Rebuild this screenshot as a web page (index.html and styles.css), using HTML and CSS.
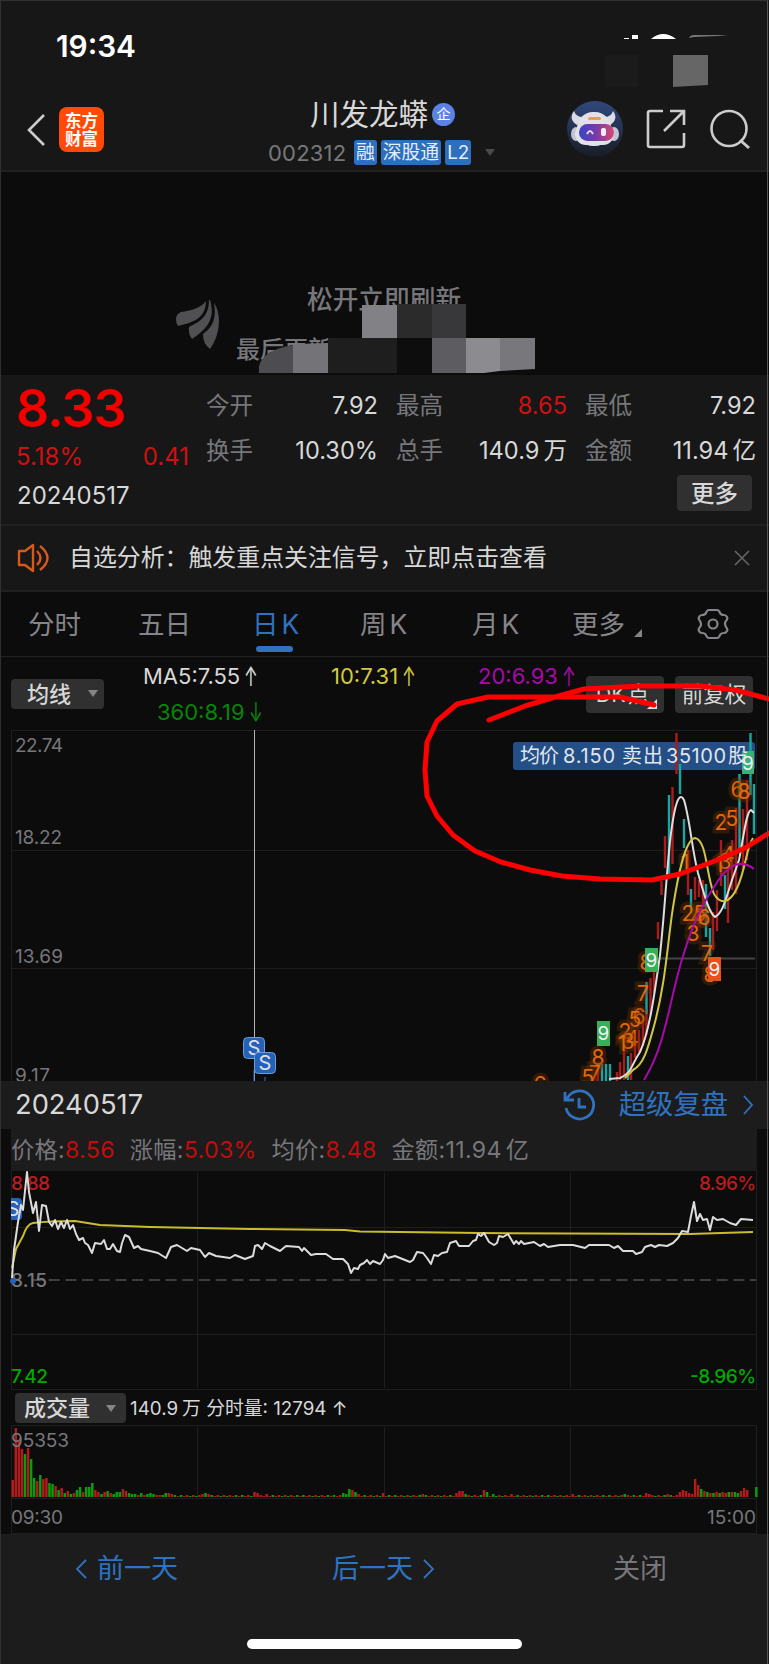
FILE: index.html
```
<!DOCTYPE html>
<html lang="zh-CN">
<head>
    <meta charset="UTF-8">
    <meta name="viewport" content="width=device-width, initial-scale=1.0">
    <title>川发龙蟒 002312</title>
    <link rel="stylesheet" href="styles.css">
</head>
<body>
    <div class="phone">
        <div class="status-bar">
            <span class="clock">19:34</span>
            <svg class="status-icons" width="130" height="60" viewBox="600 30 130 60">
                <path d="M624 38h5v1h-5zM632 35h6v4h-6zM651 39q12-10 25 0z" fill="#fff"/>
                <path d="M689 38q1-3 5-3h34l-10 1-24 1-5 1z" fill="#777"/>
                <path d="M605 55h33v32h-33z" fill="#1b1b1b"/>
                <path d="M673 55h35v30l-35 2z" fill="#666"/>
            </svg>
        </div>

        <header class="header">
            <div class="header-left">
                <svg width="20" height="34" viewBox="0 0 20 34"><path d="M18 2L3 17l15 15" fill="none" stroke="#ccc" stroke-width="2.6"/></svg>
                <div class="brand">东方<br>财富</div>
            </div>
            <div class="title">
                <div class="stock-name">川发龙蟒<span class="badge-qi">企</span></div>
                <div class="stock-code">
                    <span class="code">002312</span>
                    <span class="tag">融</span>
                    <span class="tag">深股通</span>
                    <span class="tag">L2</span>
                    <i class="caret"></i>
                </div>
            </div>
            <div class="header-right">
                <svg width="56" height="56" viewBox="0 0 56 56">
                    <defs>
                        <linearGradient id="halo" x2="0" y2="1"><stop offset="0" stop-color="#30487c"/><stop offset="1" stop-color="#191c24"/></linearGradient>
                        <linearGradient id="visor"><stop offset="0" stop-color="#3846c4"/><stop offset=".5" stop-color="#7c3aa8"/><stop offset="1" stop-color="#d84870"/></linearGradient>
                    </defs>
                    <circle cx="28" cy="28" r="28" fill="url(#halo)"/>
                    <path d="M7 10q-6 8 3 14l6-8q-7 0-9-6zM46 10q6 8-3 14l-6-8q7 0 9-6z" fill="#dcdce6"/>
                    <rect x="10" y="11" width="34" height="34" rx="16" fill="#e2e0e8"/>
                    <ellipse cx="9" cy="33" rx="5" ry="7" fill="#c3c4d2"/>
                    <ellipse cx="47" cy="33" rx="5" ry="7" fill="#c3c4d2"/>
                    <rect x="8" y="22" width="39" height="22" rx="11" fill="#e2e0e8"/>
                    <rect x="21" y="16" width="13" height="3" rx="1.5" fill="#e99b59"/>
                    <rect x="12" y="23" width="35" height="17" rx="8.5" fill="url(#visor)"/>
                    <path d="M20 33q3-6 6 0" fill="none" stroke="#ddd" stroke-width="2"/>
                    <rect x="34" y="27" width="5" height="8" rx="2" fill="#eee"/>
                </svg>
                <svg width="40" height="40" viewBox="0 0 40 40"><path d="M17 2H4q-2 0-2 2v32q0 2 2 2h32q2 0 2-2V24M24 2h14v14M38 2L18 22" fill="none" stroke="#ccc" stroke-width="2.6"/></svg>
                <svg width="42" height="42" viewBox="0 0 42 42"><circle cx="20" cy="19.500" r="17.500" fill="none" stroke="#ccc" stroke-width="2.600"/><path d="M31 31l9 8" stroke="#ccc" stroke-width="3"/></svg>
            </div>
        </header>

        <section class="refresh">
            <p class="refresh-tip">松开立即刷新</p>
            <p class="refresh-time">最后更新</p>
            <svg class="refresh-art" width="400" height="90" viewBox="160 290 400 90">
                <path d="M206 301C201 308 190 311 181 312Q176 314 176 319Q176 323 178 326C188 323 206 321 206 301Z" fill="#505052"/>
                <path d="M209 300C209 317 199 322 189 327Q188 334 192 339C202 332 217 322 210 300Z" fill="#505052"/>
                <path d="M214 303C217 321 211 328 203 334Q203 344 210 349C220 336 222 314 214 303Z" fill="#505052"/>
                <path d="M362 305h35v33h-35z" fill="#818186"/>
                <path d="M397 304h35v34h-35z" fill="#2b2b2c"/>
                <path d="M432 304h34v34h-34z" fill="#38383a"/>
                <path d="M259 373v-7q4-16 34-21v28z" fill="#4d4d51"/>
                <path d="M293 345q16-2 35-2v30h-35z" fill="#747478"/>
                <path d="M328 338h69v35h-69z" fill="#1e1e1e"/>
                <path d="M397 338h35v35h-35z" fill="#0d0d0d"/>
                <path d="M432 338h34v35h-34z" fill="#5d5d61"/>
                <path d="M466 338h34v33l-16 2h-18z" fill="#8b8b90"/>
                <path d="M500 338h35v31l-35 2z" fill="#78787c"/>
            </svg>
        </section>

        <section class="quote">
            <div class="price">
                <div class="price-now">8.33</div>
                <div class="price-change"><span>5.18%</span><span>0.41</span></div>
            </div>
            <div class="stats">
                <div class="stat"><span>今开</span><b>7.92</b></div>
                <div class="stat"><span>最高</span><b class="red">8.65</b></div>
                <div class="stat"><span>最低</span><b>7.92</b></div>
                <div class="stat"><span>换手</span><b>10.30%</b></div>
                <div class="stat"><span>总手</span><b>140.9<i class="unit">万</i></b></div>
                <div class="stat"><span>金额</span><b>11.94<i class="unit">亿</i></b></div>
            </div>
            <div class="quote-date">20240517</div>
            <div class="more-btn">更多</div>
        </section>

        <section class="notice">
            <svg width="34" height="30" viewBox="0 0 34 30"><path d="M2 8h6l8-6v26l-8-6H2zM20 8q7 7 0 14M23 3q15 12 0 24" fill="none" stroke="#d85a18" stroke-width="2.4" stroke-linejoin="round"/></svg>
            <span>自选分析：触发重点关注信号，立即点击查看</span>
            <svg width="16" height="16" viewBox="0 0 16 16"><path d="M1 1l14 14M15 1L1 15" stroke="#66666a" stroke-width="1.600"/></svg>
        </section>

        <nav class="tabs">
            <span>分时</span>
            <span>五日</span>
            <span class="active">日<i class="unit">K</i></span>
            <span>周<i class="unit">K</i></span>
            <span>月<i class="unit">K</i></span>
            <span class="tab-more">更多</span>
            <svg width="32" height="32" viewBox="0 0 32 32" fill="none" stroke="#858589" stroke-width="2.2" stroke-linejoin="round"><path d="M12 2h8q2 0 3 3 1 2 4 2 2 0 3 2 1 2-1 4t0 6q2 2 1 4-1 2-3 2-3 0-4 2-1 3-3 3h-8q-2 0-3-3-1-2-4-2-2 0-3-2-1-2 1-4t0-6q-2-2-1-4 1-2 3-2 3 0 4-2 1-3 3-3z"/><circle cx="16" cy="16" r="4.500"/></svg>
        </nav>

        <section class="ma">
            <div class="select">均线<i class="caret"></i></div>
            <div class="ma-values">
                <span class="ma5">MA5:7.55<em>↑</em></span>
                <span class="ma10">10:7.31<em>↑</em></span>
                <span class="ma20">20:6.93<em>↑</em></span>
                <span class="ma360">360:8.19<em>↓</em></span>
            </div>
            <div class="chip chip-dk">DK<i class="unit">点</i></div>
            <div class="chip">前复权</div>
        </section>

        <svg class="chart" width="769" height="351" viewBox="0 730 769 351">
            <path class="grid" d="M11.500 1081V730.500H756.500V1081M11 850.500H756M11 968.500H756"/>
            <path d="M659 958.500H755" stroke="#444" stroke-width="2"/>
            <g class="axis">
                <text x="15" y="751.500" textLength="48">22.74</text>
                <text x="15" y="844" textLength="47">18.22</text>
                <text x="15" y="962.500" textLength="48">13.69</text>
                <text x="15" y="1082" textLength="35">9.17</text>
            </g>
            <rect x="513" y="742" width="242" height="28" rx="3" fill="#234e86"/>
            <!-- candles -->
            <path class="candle up" d="M676.500 733v41M672.500 787v77M665 836v32M661.500 881v14M658 922v17M688 850v45M695 877v23M699 880v17M703 880v25M713 912v38M717 890v41M721 840v46M728 868v55M732 840v50M736 808v86M743 809v60M747 780v80M654 972v21M650.500 978v37M646.500 1010v25M643 1022v24M639 1030v22M635 1040v18M631 1053v27M624 1050v30M620 1062v18M617 1072v9M598 1070v11"/>
            <path class="candle down" d="M680 764v30M669 795v79M684 819v29M691 889v24M706 884v53M710 928v28M725 875v34M739.500 774v76M750.500 733v62M754 784v50M646.500 982v32M628 1056v24M602 1064v17M606 1064v17M610 1064v17"/>
            <g class="count">
                <text x="737" y="797">6</text><text x="744" y="799">8</text>
                <text x="721" y="830">2</text><text x="732" y="826">5</text>
                <text x="728" y="862">4</text><text x="725" y="869">3</text><text x="719" y="872">1</text>
                <text x="685" y="870">1</text>
                <text x="688" y="921">2</text><text x="697" y="924">4</text><text x="700" y="921">5</text><text x="704" y="925">6</text>
                <text x="693" y="941">3</text><text x="707" y="961">7</text><text x="710" y="982">8</text>
                <text x="646" y="970">8</text><text x="643" y="1001">7</text><text x="639" y="1024">6</text><text x="635" y="1027">5</text>
                <text x="625" y="1039">2</text><text x="632" y="1046">4</text><text x="628" y="1049">3</text><text x="622" y="1051">1</text>
                <text x="598" y="1065">8</text><text x="595" y="1081">7</text><text x="588" y="1085">5</text><text x="540" y="1092">6</text>
            </g>
            <path class="line" stroke="#dedede" d="M609 1079L620 1078C632 1073 630 1067 640 1052C650 1030 655 990 660 955C665 908 667 865 671 833C675 803 679 791 684 800C690 820 692 850 698 873C704 894 709 913 715 917C723 913 726 898 732 880L739 860C743 842 746 811 751 810L754 813"/>
            <path class="line" stroke="#cfc544" d="M625 1078L633 1070C644 1064 648 1048 654 1026C665 985 667 950 672 914C678 874 685 840 695 838C707 840 706 875 714 894C720 904 729 905 737 888C746 869 746 848 753 838"/>
            <path class="line" stroke="#a80aa8" d="M644 1080C660 1054 665 1028 673 994C683 950 695 914 714 887C727 865 740 858 754 869"/>
            <g class="nine">
                <rect x="645" y="948" width="13" height="24" fill="#3aaf5a"/><text x="651.500" y="967">9</text>
                <rect x="597" y="1021" width="13" height="25" fill="#3aaf5a"/><text x="603.500" y="1040">9</text>
                <rect x="708" y="957" width="13" height="24" fill="#e8501e"/><text x="714.500" y="976">9</text>
                <rect x="742" y="751" width="12" height="23" fill="#3aaf7a"/><text x="748" y="770">9</text>
            </g>
            <g class="deal">
                <text x="520" y="763" textLength="39">均价</text>
                <text x="563" y="763" textLength="52">8.150</text>
                <text x="622" y="763" textLength="41">卖出</text>
                <text x="666" y="763" textLength="60">35100</text>
                <text x="728" y="763">股</text>
            </g>
            <path d="M254.500 730V1081" stroke="#b5b5b5"/>
            <g class="mark">
                <path d="M265 1077v4M254 1070v11" stroke="#2f75d8"/>
                <rect x="243.500" y="1037.500" width="21" height="21" rx="4"/><text x="254" y="1055">S</text>
                <rect x="254.500" y="1052.500" width="21" height="21" rx="4"/><text x="265" y="1070">S</text>
            </g>
        </svg>

        <section class="day-head">
            <span>20240517</span>
            <div class="replay">
                <svg width="32" height="32" viewBox="0 0 32 32" fill="none" stroke="#2f72bf" stroke-width="2.800"><path d="M4 10A14 14 0 1 1 3 19M2 3v8h9M16 9v9h7"/></svg>
                <span>超级复盘</span>
                <svg width="12" height="20" viewBox="0 0 12 20"><path d="M2 1l8 9-8 9" fill="none" stroke="#2f72bf" stroke-width="1.800"/></svg>
            </div>
        </section>

        <section class="day-info">
            <span>价格:<b>8.56</b></span>
            <span>涨幅:<b>5.03%</b></span>
            <span>均价:<b>8.48</b></span>
            <span>金额:11.94<i class="unit">亿</i></span>
        </section>

        <svg class="chart" width="769" height="219" viewBox="0 1171 769 219">
            <path class="grid" d="M11.500 1171V1389.500H756.500V1171M197.500 1173V1388M384.500 1173V1388M570.500 1173V1388M11 1227.500H756M11 1334.500H756"/>
            <path d="M28 1280H756" stroke="#3e3e41" stroke-width="2" stroke-dasharray="11 5.700" stroke-dashoffset="-4"/>
            <g class="axis day-axis">
                <text x="11" y="1190" fill="#b81c1c" textLength="39">8.88</text>
                <text x="11" y="1287" fill="#77777b" textLength="36">8.15</text>
                <text x="11" y="1383" fill="#00a800" textLength="37">7.42</text>
                <text x="756" y="1190" fill="#b81c1c" text-anchor="end" textLength="57">8.96%</text>
                <text x="756" y="1383" fill="#00a800" text-anchor="end" textLength="66">-8.96%</text>
            </g>
            <g class="mark">
                <path d="M11 1198h7q4 0 4 4v14q0 4-4 4h-7z" fill="#2461b8"/>
                <text x="13" y="1216">S</text>
                <circle cx="13" cy="1281" r="3" fill="#2461b8"/>
                <path d="M0 1195h11v28H0z" fill="#0c0c0c"/>
            </g>
            <path class="line" stroke="#c9bd2c" d="M12 1268L16 1249L23 1236Q27 1224 33 1223Q50 1221 75 1221L100 1225L150 1227L250 1229L345 1230L360 1231.500L400 1232L480 1233L690 1234L753 1232"/>
            <path class="line" stroke="#dcdcdc" d="M12 1278L14 1250 18 1222 21 1205 23 1210 27 1172 29 1192 33 1213 36 1202 39 1231 42 1205 46 1206 49 1222 52 1226 55 1220 58 1229 61 1222 64 1228 67 1220 70 1229 73 1225 76 1234 79 1240 83 1238 85 1243 88 1245 92 1253 95 1243 101 1244 104 1240 107 1249 110 1249 113 1244 117 1251 120 1252 122 1243 125 1235 129 1237 134 1248 138 1246 141 1249 150 1251 158 1253 166 1258 171 1247 177 1245 187 1251 191 1248 200 1250 205 1257 209 1253 216 1256 230 1258 235 1255 245 1259 253 1256 255 1246 258 1245 262 1249 265 1243 270 1246 280 1251 286 1246 299 1247 302 1251 304 1248 311 1255 316 1254 326 1254 333 1259 343 1259 348 1264 351 1273 354 1268 358 1269 360 1265 364 1263 367 1260 370 1264 373 1261 380 1264 383 1260 385 1254 388 1258 395 1256 400 1258 410 1262 413 1260 417 1252 423 1253 427 1258 431 1264 434 1255 438 1256 442 1253 447 1252 450 1243 456 1241 459 1246 469 1246 473 1241 476 1240 478 1234 481 1236 484 1233 489 1242 494 1245 497 1243 499 1236 503 1237 508 1234 514 1244 516 1241 519 1244 521 1241 524 1244 534 1242 540 1246 544 1244 548 1247 560 1245 573 1245 585 1248 589 1245 609 1245 614 1248 618 1246 623 1251 633 1251 636 1254 642 1252 645 1247 651 1245 655 1247 659 1245 667 1246 673 1243 678 1238 682 1231 688 1232 691 1216 694 1202 697 1221 700 1214 703 1220 707 1219 710 1230 713 1217 717 1220 723 1219 730 1223 736 1225 741 1219 753 1220"/>
        </svg>

        <section class="volume-head">
            <div class="select">成交量<i class="caret"></i></div>
            <span>140.9<i class="unit">万</i> 分时量: 12794 <em>↑</em></span>
        </section>

        <svg class="chart" width="769" height="109" viewBox="0 1425 769 109">
            <path class="grid" d="M11.500 1425.500H756.500V1533.500H11.500ZM197.500 1427V1497M384.500 1427V1497M570.500 1427V1497M11 1498.500H756"/>
            <g id="volume"></g>
            <g class="axis">
                <text x="11" y="1447" textLength="58">95353</text>
                <text x="11" y="1523.500" textLength="52">09:30</text>
                <text x="756" y="1523.500" text-anchor="end" textLength="49">15:00</text>
            </g>
        </svg>

        <footer class="footer">
            <div class="footer-nav">
                <span class="link"><svg width="11" height="20" viewBox="0 0 11 20"><path d="M10 1L1 10l9 9"/></svg>前一天</span>
                <span class="link">后一天<svg width="11" height="20" viewBox="0 0 11 20"><path d="M1 1l9 9-9 9"/></svg></span>
                <span>关闭</span>
            </div>
            <div class="home-bar"></div>
        </footer>

        <svg class="scribble" width="769" height="240" viewBox="0 670 769 240">
            <path d="M489 720L525 706 555 697 584 689 640 686 700 686 735 690 769 699M654 705L620 697 488 697 457 704 437 721 427 742 425 770 427 796 437 816 453 835 475 851 501 862 530 870 562 876 600 879 652 880 680 874 720 859 745 848 769 833"/>
        </svg>
    </div>
    <script src="volume.js"></script>
</body>
</html>
```
FILE: volume.js
```
// minute volume bars: r/g = colour, number = height in px
var first = 'r17 r69 r57 r48 g43 r49 g38 g19 r16 g22 r18 r19 g14 g13 r11 g7 r9 g4 r6 g3 r4 g7 g10 r5 g10 g10 g14 r7 r5 g3 r5 g6 r4 g3 g5 g5 r8 r6 g4 g3 g3 r2 g4 r2 g3 g4 g3 r2 r2 g2 g4 r4 r3 g2';
var peaks = {62: 'r3', 63: 'g4', 64: 'r3', 79: 'r5', 80: 'r4', 83: 'r3', 108: 'g4', 109: 'g3', 110: 'g8', 111: 'r7', 112: 'g5', 113: 'r3', 121: 'r4',
    134: 'r3', 145: 'r4', 146: 'r6', 147: 'r6', 148: 'g3', 154: 'r7', 155: 'g5', 157: 'g3', 163: 'r3', 183: 'r3', 200: 'g3', 207: 'r4', 208: 'r3',
    214: 'r3', 218: 'r5', 219: 'r7', 220: 'r6', 221: 'r4', 222: 'r3', 223: 'r18', 224: 'r12', 225: 'g8', 226: 'r6', 227: 'g5',
    228: 'r4', 229: 'g4', 230: 'r5', 231: 'g4', 232: 'r5', 233: 'r4', 234: 'g5', 235: 'r5', 236: 'g5', 237: 'g4', 238: 'r6', 239: 'r9', 240: 'r7', 243: 'g10'};
var bars = first.split(' ');
for (var i = bars.length; i < 244; i++) {
    bars.push(peaks[i] || ((i * 7) % 5 < 2 ? 'g' : 'r') + (1 + (i * 3) % 2));
}
bars[241] = bars[242] = 'r0';

document.getElementById('volume').innerHTML = bars.map(function (bar, i) {
    var h = +bar.slice(1);
    var color = bar[0] === 'r' ? '#b01c1c' : '#0a9c0a';
    return '<rect x="' + (11.5 + i * 3.06).toFixed(2) + '" y="' + (1497 - h) + '" width="2.5" height="' + h + '" fill="' + color + '"/>';
}).join('');
```
FILE: styles.css
```
* {
    box-sizing: border-box;
}

body {
    margin: 0;
    background: #0c0c0c;
    color: #d8d8d8;
    font-family: Inter, "Noto Sans CJK SC", sans-serif;
}

svg {
    display: block;
    flex: none;
}

em, i {
    font-style: normal;
}

b {
    font-weight: 400;
}

.phone {
    position: relative;
    width: 769px;
    height: 1664px;
    overflow: hidden;
}

.phone::after {
    content: "";
    position: absolute;
    inset: 0 1px 0 0;
    border: 1px solid #303030;
    border-right-color: #555;
    border-bottom: 0;
}

.caret {
    border: 5px solid transparent;
    border-top: 7px solid #858589;
    border-bottom: 0;
}

/* gap between latin and chinese characters */
.unit {
    margin-left: 4px;
}

.red {
    color: #d01010;
}

/* top */
.status-bar {
    display: flex;
    justify-content: space-between;
    height: 94px;
    padding: 30px 39px 0 56px;
    background: #171717;
}

.clock {
    font-size: 29.8px;
    font-weight: 600;
    line-height: 32px;
    color: #fff;
}

.header {
    display: grid;
    grid-template-columns: 268px 1fr 203px;
    height: 78px;
    background: #171717;
    border-bottom: 2px solid #212121;
}

.header-left {
    display: flex;
    gap: 13px;
    padding: 13px 0 0 26px;
}

.header-left svg {
    margin-top: 6px;
}

.brand {
    width: 45px;
    height: 45px;
    padding-top: 4px;
    border-radius: 8px;
    background: #ff4a08;
    color: #fff;
    font-family: "Noto Sans CJK SC", sans-serif;
    font-size: 16.5px;
    font-weight: 700;
    line-height: 18px;
    text-align: center;
}

.stock-name {
    display: flex;
    align-items: flex-start;
    gap: 4px;
    height: 41px;
    padding-left: 42px;
    font-size: 29.5px;
    line-height: 41px;
}

.badge-qi {
    width: 23px;
    height: 23px;
    margin-top: 9px;
    border-radius: 50%;
    background: #5c82e6;
    color: #fff;
    font-size: 14px;
    line-height: 22px;
    text-align: center;
}

.stock-code {
    display: flex;
    align-items: center;
    height: 35px;
    gap: 4px;
}

.code {
    width: 81px;
    margin-right: 1px;
    color: #77777c;
    font-size: 22px;
    letter-spacing: .2px;
}

.tag {
    padding: 0 2px;
    height: 25px;
    border-radius: 3px;
    background: #2d6fbe;
    color: #e6eefa;
    font-size: 18.8px;
    line-height: 25px;
}

.stock-code .caret {
    margin-left: 10px;
    border-top-color: #4a4a4a;
}

.header-right {
    display: flex;
    align-items: flex-start;
    gap: 23px;
    padding: 7px 0 0 1px;
}

.header-right svg + svg {
    margin-top: 8px;
}

/* pull to refresh */
.refresh {
    position: relative;
    height: 203px;
    padding-top: 108px;
    color: #77777b;
    font-weight: 500;
}

.refresh p {
    margin: 0;
    font-size: 25.7px;
    line-height: 40px;
}

.refresh-tip {
    height: 50px;
    padding-left: 307px;
}

.refresh .refresh-time {
    padding-left: 236px;
    font-size: 24px;
}

.refresh-art {
    position: absolute;
    left: 160px;
    top: 118px;
}

/* quote */
.quote {
    display: grid;
    grid-template-columns: 206px 1fr;
    grid-template-rows: 94px 56px;
    height: 151px;
    background: #171717;
    border-bottom: 2px solid #212121;
}

.price {
    padding: 9px 17px 0 16px;
    color: #f20000;
}

.price-now {
    height: 57px;
    font-size: 52px;
    font-weight: 600;
    line-height: 50px;
    letter-spacing: -1px;
}

.price-change {
    display: flex;
    justify-content: space-between;
    color: #d01010;
    font-size: 24px;
    line-height: 32px;
}

.stats {
    display: grid;
    grid-template-columns: 172px 171px 171px;
    grid-template-rows: 45px 45px;
    column-gap: 18px;
    padding-top: 8px;
}

.stat {
    display: flex;
    justify-content: space-between;
    font-size: 23.6px;
    line-height: 45px;
}

.stat span {
    color: #77777b;
}

.quote-date {
    padding: 6px 0 0 17px;
    font-size: 24px;
    line-height: 41px;
    white-space: nowrap;
}

.more-btn {
    justify-self: end;
    width: 75px;
    height: 36px;
    margin: 6px 17px 0 0;
    border-radius: 4px;
    background: #303030;
    font-size: 23.5px;
    font-weight: 500;
    line-height: 37px;
    text-align: center;
}

.notice {
    display: flex;
    align-items: center;
    height: 66px;
    padding: 0 19px 0 17px;
    background: #171717;
    border-bottom: 2px solid #212121;
    font-size: 23.9px;
    line-height: 64px;
}

.notice span {
    flex: 1;
    height: 64px;
    margin-left: 18px;
}

/* tabs */
.tabs {
    display: grid;
    grid-template-columns: 110px 114px 108px 112px 100px 125px auto;
    align-items: center;
    height: 65px;
    padding-left: 28px;
    border-bottom: 1px solid #222;
    color: #858589;
    font-size: 26.5px;
    line-height: 62px;
}

.tabs .unit {
    margin-left: 3px;
}

.active {
    position: relative;
    color: #2f72bf;
}

.active::after {
    content: "";
    position: absolute;
    left: 4px;
    bottom: 3px;
    width: 37px;
    height: 6px;
    border-radius: 3px;
    background: #2f72bf;
}

.tab-more::after, .chip-dk::after {
    content: "";
    display: inline-block;
    margin-left: 9px;
    border-left: 8px solid transparent;
    border-bottom: 8px solid #858589;
    vertical-align: -3px;
}

.ma {
    display: grid;
    grid-template-columns: 132px 443px 78px 89px;
    height: 73px;
    padding-left: 11px;
}

.select {
    display: flex;
    align-items: center;
    justify-content: space-between;
    width: 93px;
    height: 30px;
    margin-top: 22px;
    padding: 0 6px 1px 16px;
    border-radius: 4px;
    background: #303030;
    font-size: 22px;
    font-weight: 500;
    line-height: 28px;
}

.ma-values {
    display: grid;
    grid-template-columns: 188px 147px 108px;
    grid-template-rows: 36px 32px;
    font-size: 22px;
    line-height: 38px;
}

.ma-values em {
    display: inline-block;
    width: 14px;
    margin-left: 4px;
    transform: scale(.75, 1.25);
    transform-origin: left;
}

.ma10 { color: #d3c93c; }
.ma20 { color: #a80aa8; }

.ma360 {
    padding-left: 14px;
    color: #078507;
}

.chip {
    width: 78px;
    height: 37px;
    margin-top: 19px;
    border-radius: 4px;
    background: #303030;
    font-size: 21.5px;
    line-height: 37px;
    text-align: center;
    white-space: nowrap;
}

.chip .unit {
    margin-left: 2px;
}

.chip + .chip {
    margin-left: 11px;
}

.chip-dk {
    padding-left: 3px;
}

.chip-dk::after {
    margin-left: -2px;
    border-left-width: 10px;
    border-bottom: 10px solid #ddd;
    vertical-align: -7px;
}

/* charts */
.grid {
    fill: none;
    stroke: #1e1e1e;
}

.line {
    fill: none;
    stroke-width: 2;
    stroke-linejoin: round;
}

.axis {
    fill: #77777b;
    font-size: 19px;
}

.day-axis {
    font-weight: 500;
}

.candle {
    stroke-width: 2.4;
}

.up { stroke: #a81c1c; }
.down { stroke: #1aa5a0; }

.count {
    fill: #e06a0c;
    font-size: 21px;
    text-anchor: middle;
    paint-order: stroke;
    stroke: rgba(120, 50, 0, .35);
    stroke-width: 7px;
}

.nine {
    fill: #f2f2f2;
    font-size: 19px;
    text-anchor: middle;
}

.deal {
    fill: #e0e6ee;
    font-size: 20px;
}

.mark rect {
    fill: #2461b8;
    stroke: #6e9bd6;
}

.mark text {
    fill: #e0e0e0;
    font-size: 20px;
    text-anchor: middle;
}

/* selected day */
.day-head {
    display: flex;
    align-items: center;
    justify-content: space-between;
    height: 48px;
    padding: 0 15px;
    background: #1c1c1c;
    font-size: 27.3px;
    line-height: 48px;
}

.day-head > span {
    height: 48px;
}

.replay {
    display: flex;
    align-items: center;
    height: 48px;
    color: #2f72bf;
}

.replay span {
    margin: 0 14px 0 24px;
}

.day-info {
    display: flex;
    gap: 15px;
    height: 42px;
    margin: 0 12px 0 11px;
    background: #1c1c1c;
    color: #77777b;
    font-size: 23.2px;
    line-height: 43px;
    letter-spacing: .3px;
}

.day-info b {
    color: #c00c0c;
}

.volume-head {
    display: flex;
    gap: 4px;
    height: 35px;
    padding-left: 15px;
    font-size: 18.8px;
    line-height: 37px;
}

.volume-head .select {
    width: 111px;
    margin-top: 3px;
    padding: 0 10px 0 9px;
}

.footer {
    height: 130px;
    background: #1c1c1c;
    color: #77777b;
}

.footer-nav {
    display: grid;
    grid-template-columns: 254px 258px 256px;
    height: 105px;
    font-size: 27px;
    line-height: 70px;
    text-align: center;
}

.link {
    display: flex;
    align-items: center;
    justify-content: center;
    gap: 10px;
    height: 70px;
    color: #2f72bf;
}

.link svg {
    fill: none;
    stroke: #2f72bf;
    stroke-width: 1.8;
}

.home-bar {
    width: 275px;
    height: 10px;
    margin-left: 247px;
    border-radius: 5px;
    background: #fff;
}

.scribble {
    position: absolute;
    left: 0;
    top: 670px;
    fill: none;
    stroke: #f00;
    stroke-width: 5;
    stroke-linecap: round;
    stroke-linejoin: round;
}
```
